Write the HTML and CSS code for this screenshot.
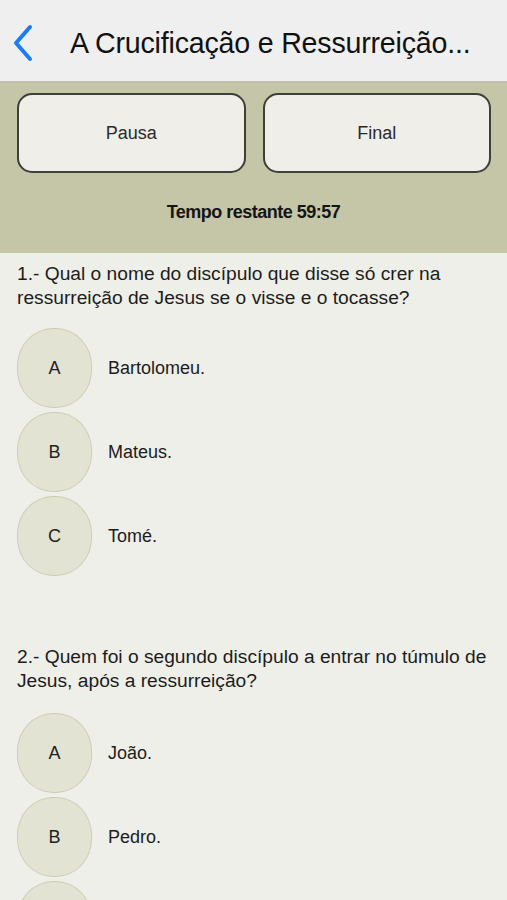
FILE: index.html
```html
<!DOCTYPE html>
<html lang="pt">
<head>
<meta charset="utf-8">
<link rel="stylesheet" href="styles.css">
</head>
<body>
<header class="nav">
  <svg class="back" width="22" height="38" viewBox="0 0 22 38"><path d="M18 3 L4 19 L18 35" fill="none" stroke="#1b7cf4" stroke-width="4" stroke-linecap="round" stroke-linejoin="round"/></svg>
  <h1 class="title">A Crucificação e Ressurreição...</h1>
</header>
<section class="panel">
  <div class="buttons">
    <button class="btn">Pausa</button>
    <button class="btn">Final</button>
  </div>
  <div class="timer">Tempo restante 59:57</div>
</section>
<main class="content">
  <div class="question">
    <p class="qtext">1.- Qual o nome do discípulo que disse só crer na ressurreição de Jesus se o visse e o tocasse?</p>
    <div class="opt"><span class="circle">A</span><span class="ans">Bartolomeu.</span></div>
    <div class="opt"><span class="circle">B</span><span class="ans">Mateus.</span></div>
    <div class="opt"><span class="circle">C</span><span class="ans">Tomé.</span></div>
  </div>
  <div class="question q2">
    <p class="qtext">2.- Quem foi o segundo discípulo a entrar no túmulo de Jesus, após a ressurreição?</p>
    <div class="opt"><span class="circle">A</span><span class="ans">João.</span></div>
    <div class="opt"><span class="circle">B</span><span class="ans">Pedro.</span></div>
    <div class="opt"><span class="circle"></span></div>
  </div>
</main>
</body>
</html>
```
FILE: styles.css
```css
html, body {
  margin: 0;
  padding: 0;
}
body {
  width: 507px;
  height: 900px;
  overflow: hidden;
  background: #efefe9;
  font-family: "Liberation Sans", Arial, sans-serif;
  color: #1a1a1a;
}
.nav {
  height: 81px;
  background: #efefef;
  border-bottom: 2px solid #c0c0a8;
  display: flex;
  align-items: center;
  box-sizing: content-box;
}
.back {
  margin-left: 12px;
  margin-top: 4px;
  flex: none;
}
.title {
  margin: 6px 0 0 36px;
  font-size: 28.6px;
  font-weight: normal;
  color: #111;
  white-space: nowrap;
  letter-spacing: -0.2px;
}
.panel {
  background: #c5c5a8;
  height: 170px;
  padding-top: 10px;
  box-sizing: border-box;
}
.buttons {
  display: flex;
  gap: 17px;
  padding: 0 16px 0 17px;
}
.btn {
  flex: 1;
  height: 80px;
  border: 2px solid #3f3f3a;
  border-radius: 15px;
  background: #efeee8;
  font-family: "Liberation Sans", Arial, sans-serif;
  font-size: 18px;
  color: #2a2a2a;
  padding: 0;
}
.timer {
  text-align: center;
  font-size: 18px;
  font-weight: bold;
  margin-top: 29px;
  color: #151515;
  letter-spacing: -0.5px;
}
.content {
  padding: 0 17px;
}
.qtext {
  margin: 9px 0 0;
  font-size: 19.2px;
  line-height: 24px;
  color: #1c1c1c;
  width: 480px;
}
.question .qtext + .opt {
  margin-top: 18px;
}
.opt {
  display: flex;
  align-items: center;
  height: 80px;
  margin-bottom: 4px;
}
.circle {
  width: 73px;
  height: 78px;
  border: 1px solid #cdcdb3;
  border-radius: 36px / 38px;
  background: #e3e3d3;
  display: flex;
  align-items: center;
  justify-content: center;
  font-size: 18px;
  color: #222;
  flex: none;
}
.ans {
  margin-left: 16px;
  font-size: 18px;
  color: #1c1c1c;
}
.q2 {
  margin-top: 69px;
}
.q2 .qtext + .opt {
  margin-top: 20px;
}
```
